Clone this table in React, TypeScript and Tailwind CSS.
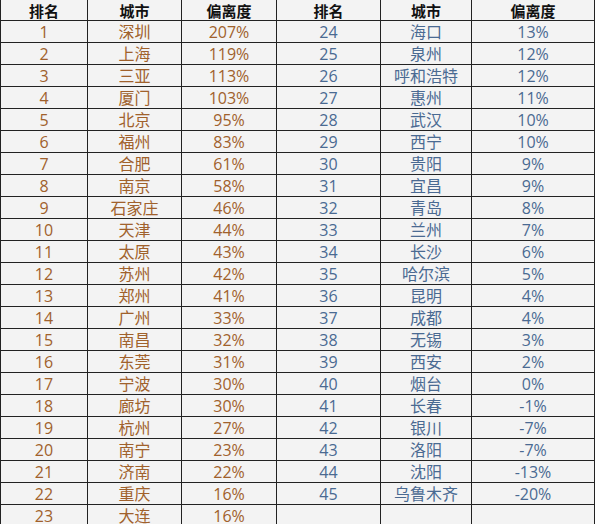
import React from "react";

const left: [string, string, string][] = [
  ["1", "深圳", "207%"],
  ["2", "上海", "119%"],
  ["3", "三亚", "113%"],
  ["4", "厦门", "103%"],
  ["5", "北京", "95%"],
  ["6", "福州", "83%"],
  ["7", "合肥", "61%"],
  ["8", "南京", "58%"],
  ["9", "石家庄", "46%"],
  ["10", "天津", "44%"],
  ["11", "太原", "43%"],
  ["12", "苏州", "42%"],
  ["13", "郑州", "41%"],
  ["14", "广州", "33%"],
  ["15", "南昌", "32%"],
  ["16", "东莞", "31%"],
  ["17", "宁波", "30%"],
  ["18", "廊坊", "30%"],
  ["19", "杭州", "27%"],
  ["20", "南宁", "23%"],
  ["21", "济南", "22%"],
  ["22", "重庆", "16%"],
  ["23", "大连", "16%"],
];

const right: [string, string, string][] = [
  ["24", "海口", "13%"],
  ["25", "泉州", "12%"],
  ["26", "呼和浩特", "12%"],
  ["27", "惠州", "11%"],
  ["28", "武汉", "10%"],
  ["29", "西宁", "10%"],
  ["30", "贵阳", "9%"],
  ["31", "宜昌", "9%"],
  ["32", "青岛", "8%"],
  ["33", "兰州", "7%"],
  ["34", "长沙", "6%"],
  ["35", "哈尔滨", "5%"],
  ["36", "昆明", "4%"],
  ["37", "成都", "4%"],
  ["38", "无锡", "3%"],
  ["39", "西安", "2%"],
  ["40", "烟台", "0%"],
  ["41", "长春", "-1%"],
  ["42", "银川", "-7%"],
  ["43", "洛阳", "-7%"],
  ["44", "沈阳", "-13%"],
  ["45", "乌鲁木齐", "-20%"],
  ["", "", ""],
];

const font = { fontFamily: '"Open Sans", "Noto Sans CJK SC", sans-serif' };

export default function App() {
  const headers = ["排名", "城市", "偏离度", "排名", "城市", "偏离度"];
  return (
    <div className="w-[595px] h-[524px] overflow-hidden bg-[#f3f3f3]" style={font}>
      <table className="border-collapse table-fixed w-[594px] text-[16px] leading-none">
        <colgroup>
          <col className="w-[87px]" />
          <col className="w-[94px]" />
          <col className="w-[95px]" />
          <col className="w-[104px]" />
          <col className="w-[91px]" />
          <col className="w-[123px]" />
        </colgroup>
        <thead>
          <tr className="h-[20px]">
            {headers.map((h, i) => (
              <th
                key={i}
                className="border-x border-b border-[#222] font-bold text-[15px] leading-[19px] text-[#111] text-center p-0 pt-[1px] bg-[#f3f3f3]"
                style={{ fontFamily: '"Noto Sans CJK SC", sans-serif' }}
              >
                {h}
              </th>
            ))}
          </tr>
        </thead>
        <tbody>
          {left.map((l, i) => {
            const r = right[i];
            return (
              <tr key={i} className="h-[22px]">
                {l.map((c, j) => (
                  <td key={"l" + j} className="border border-[#222] text-center p-0 text-[#a0612c]">
                    {c}
                  </td>
                ))}
                {r.map((c, j) => (
                  <td key={"r" + j} className="border border-[#222] text-center p-0 text-[#4a6a92]">
                    {c}
                  </td>
                ))}
              </tr>
            );
          })}
        </tbody>
      </table>
    </div>
  );
}
